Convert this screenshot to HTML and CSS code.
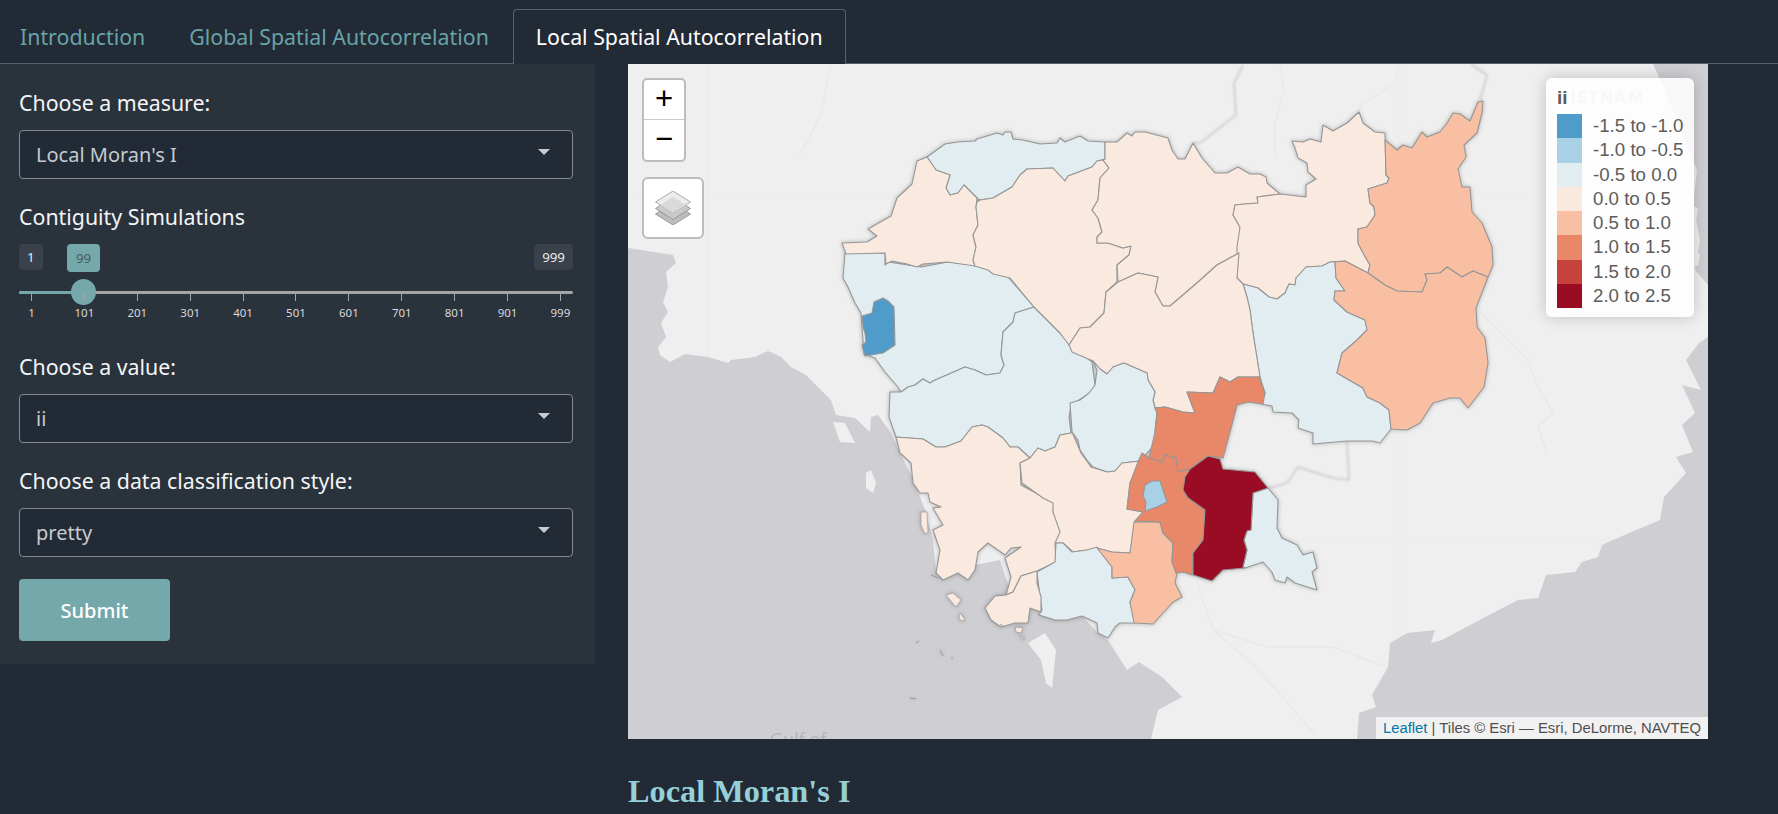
FILE: index.html
```html
<!DOCTYPE html>
<html lang="en">
<head>
<meta charset="utf-8">
<title>Local Spatial Autocorrelation</title>
<link rel="stylesheet" href="styles.css">
</head>
<body>
<nav class="tabs">
  <a class="tab">Introduction</a>
  <a class="tab">Global Spatial Autocorrelation</a>
  <a class="tab tab-active">Local Spatial Autocorrelation</a>
</nav>
<main class="layout">
  <aside class="sidebar">
    <div class="field">
      <div class="field-label">Choose a measure:</div>
      <div class="select"><span>Local Moran's I</span><i class="caret"></i></div>
    </div>
    <div class="field">
      <div class="field-label">Contiguity Simulations</div>
      <div class="slider">
        <div class="pills"><span class="pill">1</span><span class="pill">999</span></div>
        <span class="pill pill-value">99</span>
        <div class="track"><div class="track-fill"></div></div>
        <div class="handle"></div>
        <div class="grid">
          <div class="tick"><i></i><span>1</span></div>
          <div class="tick"><i></i><span>101</span></div>
          <div class="tick"><i></i><span>201</span></div>
          <div class="tick"><i></i><span>301</span></div>
          <div class="tick"><i></i><span>401</span></div>
          <div class="tick"><i></i><span>501</span></div>
          <div class="tick"><i></i><span>601</span></div>
          <div class="tick"><i></i><span>701</span></div>
          <div class="tick"><i></i><span>801</span></div>
          <div class="tick"><i></i><span>901</span></div>
          <div class="tick"><i></i><span>999</span></div>
        </div>
      </div>
    </div>
    <div class="field">
      <div class="field-label">Choose a value:</div>
      <div class="select"><span>ii</span><i class="caret"></i></div>
    </div>
    <div class="field">
      <div class="field-label">Choose a data classification style:</div>
      <div class="select"><span>pretty</span><i class="caret"></i></div>
    </div>
    <button class="submit">Submit</button>
  </aside>
  <section class="content">
    <div class="map">
      <svg class="map-svg" viewBox="628 64 1080 675" xmlns="http://www.w3.org/2000/svg">
        <g class="seams">
          <path d="M708 64V739M1400 64V739M628 196H1708M628 540H1708"/>
        </g>
        <g class="water">
          <path d="M628,248 673,255 676,263 666,272 668,287 663,302 668,312 661,323 666,337 658,347 660,355 670,362 685,354 708,357 728,363 731,360 755,357 768,351 781,357 791,367 806,375 821,390 831,400 836,415 855,418 870,432 871,417 878,415 891,433 900,453 915,483 925,510 933,540 936,573 1000,560 1010,590 1040,612 1055,620 1082,616 1098,633 1108,640 1127,670 1139,662 1162,677 1182,697 1158,710 1151,739 628,739Z"/>
          <path d="M1357,739 1359,713 1376,707 1372,695 1388,667 1390,643 1407,633 1435,630 1431,643 1442,640 1489,615 1518,600 1538,598 1546,575 1575,572 1582,562 1598,557 1602,545 1629,533 1660,520 1664,497 1686,473 1676,457 1693,452 1682,425 1695,413 1682,385 1701,390 1686,360 1699,343 1708,337 1708,739Z"/>
          <path d="M1653,64 1708,64 1708,285 1695,270 1700,240 1693,205 1697,170 1680,130 1665,90Z"/>
        </g>
        <g class="land-islands">
          <path d="M833,422 845,423 855,443 840,442Z"/>
          <path d="M866,473 871,470 876,483 873,493 866,488Z"/>
          <path d="M1028,643 1045,633 1056,650 1052,688 1046,683 1041,660Z"/>
          <path d="M1690,205 1698,208 1696,222 1688,218Z"/>
          <path d="M1692,250 1700,254 1698,266 1690,262Z"/>
        </g>
        <g class="rivers">
          <path d="M830,67 822,110 810,137 800,153"/>
          <path d="M1280,65 1284,90 1275,123 1275,157"/>
          <path d="M1398,67 1395,83 1364,103 1357,112"/>
          <path d="M1481,313 1528,360 1536,383 1553,413 1538,427 1547,453"/>
          <path d="M1197,583 1213,630 1267,647 1333,647 1386,667"/>
          <path d="M1213,630 1256,667 1314,733"/>
        </g>
        <g class="borders">
          <path d="M1243,65 1234,83 1236,115 1200,143 1193,143"/>
          <path d="M1471,64 1487,75 1480,100"/>
          <path d="M1347,442 1349,480 1333,478 1298,467 1287,483 1269,488"/>
        </g>
        <text class="map-label" x="770" y="746">Gulf of</text>
        <text class="map-label map-label-country" x="1558" y="103">VIETNAM</text>
        <g class="provinces">
          <polygon class="c3" points="845,253 885,253 885,265 888,262 921,267 948,262 975,265 990,270 995,273 1008,277 1034,307 1015,313 1013,322 1003,332 1001,355 1004,365 1000,373 986,375 975,370 965,367 933,381 930,383 923,379 915,385 908,387 901,392 898,387 885,372 875,358 864,354 861,313 855,303 848,287 843,278"/>
          <polygon class="c3" points="890,392 889,417 896,437 923,439 936,447 945,447 961,441 972,427 982,425 988,427 1003,438 1010,447 1018,447 1030,458 1038,448 1045,451 1055,447 1060,435 1071,433 1069,417 1071,405 1090,393 1095,385 1092,362 1070,345 1060,333 1034,307 1015,313 1013,322 1003,332 1001,355 1004,365 1000,373 986,375 975,370 965,367 933,381 930,383 923,379 915,385 908,387 901,392"/>
          <polygon class="c3" points="927,157 945,144 958,142 975,141 977,139 997,133 1003,135 1005,132 1011,132 1013,139 1022,140 1027,141 1040,144 1057,143 1060,138 1065,142 1080,136 1088,141 1105,142 1105,159 1097,161 1092,167 1068,176 1065,181 1053,168 1027,169 1020,175 1012,187 993,198 980,200 977,198 964,185 958,193 950,195 946,188 950,175 936,170"/>
          <polygon class="c4" points="842,243 867,242 877,236 868,229 891,216 897,198 912,184 917,161 927,157 936,170 950,175 946,188 950,195 958,193 964,185 977,198 976,207 978,225 973,235 976,247 973,260 975,266 947,262 923,264 917,267 907,264 892,261 886,264 885,253 846,254"/>
          <polygon class="c4" points="977,202 980,200 993,198 1012,187 1020,175 1027,169 1053,168 1065,181 1068,176 1092,167 1097,161 1103,160 1109,168 1100,178 1098,200 1092,210 1098,218 1102,232 1097,237 1097,243 1108,243 1123,248 1131,246 1129,255 1117,265 1117,282 1106,292 1104,313 1090,327 1080,328 1069,345 1060,333 1034,307 1010,278 993,274 988,270 975,266 973,260 976,247 973,235 978,225 976,207"/>
          <polygon class="c4" points="1105,142 1117,142 1127,133 1132,136 1135,132 1145,132 1168,138 1172,150 1178,159 1185,159 1193,143 1202,158 1215,173 1227,173 1238,167 1250,174 1260,174 1266,177 1267,183 1280,194 1257,197 1258,203 1245,204 1235,205 1233,215 1240,227 1240,247 1239,253 1217,265 1198,282 1183,295 1170,306 1163,306 1155,292 1158,277 1138,273 1118,282 1117,265 1129,255 1131,246 1123,248 1108,243 1097,243 1097,237 1102,232 1098,218 1092,210 1098,200 1100,178 1109,168 1103,160 1105,159"/>
          <polygon class="c4" points="1292,141 1303,142 1310,139 1321,142 1323,125 1333,131 1347,123 1359,112 1363,123 1375,132 1385,133 1386,175 1389,178 1387,183 1368,189 1370,203 1374,207 1375,215 1367,227 1358,229 1358,243 1363,253 1370,265 1368,273 1345,261 1330,262 1322,266 1306,267 1296,278 1295,285 1289,284 1285,293 1277,299 1269,297 1258,288 1243,284 1237,278 1237,247 1240,227 1233,215 1235,205 1245,204 1258,203 1257,197 1280,194 1306,197 1306,185 1316,179 1308,172 1307,163 1298,158 1295,148"/>
          <polygon class="c5" points="1385,140 1397,150 1403,145 1412,148 1422,132 1427,137 1440,132 1447,123 1453,113 1460,114 1470,121 1478,102 1483,101 1482,113 1477,133 1464,145 1466,157 1458,169 1462,187 1470,187 1472,212 1482,223 1492,247 1493,265 1488,277 1473,271 1462,277 1447,267 1440,273 1425,274 1427,280 1422,292 1397,291 1385,285 1368,273 1370,265 1363,253 1358,243 1358,229 1367,227 1375,215 1374,207 1370,203 1368,189 1387,183 1389,178 1386,175"/>
          <polygon class="c3" points="1243,284 1258,288 1269,297 1277,299 1285,293 1289,284 1295,285 1296,278 1306,267 1322,266 1330,262 1335,262 1336,278 1345,291 1335,291 1334,300 1347,312 1365,320 1367,330 1357,340 1342,353 1337,373 1363,388 1367,397 1380,403 1389,410 1391,429 1380,443 1373,441 1347,441 1313,444 1313,433 1298,428 1299,420 1292,413 1273,412 1272,406 1261,404 1265,393 1260,377 1253,333 1250,310 1247,297"/>
          <polygon class="c5" points="1335,262 1345,261 1368,273 1385,285 1397,291 1422,292 1427,280 1425,274 1440,273 1447,267 1462,277 1473,271 1488,277 1476,308 1477,327 1485,338 1488,363 1484,387 1468,408 1460,398 1450,398 1433,403 1420,423 1407,430 1391,429 1389,410 1380,403 1367,397 1363,388 1337,373 1342,353 1357,340 1367,330 1365,320 1347,312 1334,300 1335,291 1345,291 1336,278"/>
          <polygon class="c4" points="1069,345 1080,328 1090,327 1104,313 1106,292 1118,282 1138,273 1158,277 1155,292 1163,306 1170,306 1183,295 1198,282 1217,265 1239,253 1237,278 1243,284 1247,297 1250,310 1253,333 1260,377 1238,377 1230,382 1220,377 1213,393 1187,392 1195,413 1183,412 1165,407 1155,408 1153,400 1155,392 1148,380 1147,373 1124,363 1113,367 1107,374 1100,369 1093,361 1072,352"/>
          <polygon class="c3" points="1107,374 1113,367 1124,363 1147,373 1148,380 1155,392 1153,400 1155,408 1157,413 1155,430 1157,440 1150,450 1147,453 1140,461 1122,463 1115,471 1107,472 1093,467 1087,460 1080,450 1078,440 1072,432 1070,403 1080,400 1089,393 1095,385 1097,370 1093,361 1100,369"/>
          <polygon class="c4" points="896,437 923,439 936,447 945,447 961,441 972,427 982,425 988,427 1003,438 1010,447 1018,447 1030,458 1020,463 1021,485 1045,498 1054,503 1053,512 1061,527 1061,543 1055,544 1056,562 1037,571 1021,576 1013,592 1006,595 1011,577 1005,558 1021,547 1011,548 1005,555 988,543 978,552 975,570 968,580 958,573 943,580 936,573 940,550 933,530 943,525 933,508 941,507 930,502 928,493 920,493 913,483 911,463 900,453"/>
          <polygon class="c4" points="1020,463 1030,458 1038,448 1045,451 1055,447 1060,435 1071,433 1072,432 1081,453 1091,467 1107,472 1115,471 1122,463 1140,461 1130,483 1127,509 1143,512 1135,521 1130,553 1112,552 1097,548 1087,550 1073,552 1063,543 1055,543 1060,532 1053,512 1053,503 1043,498 1022,483"/>
          <polygon class="c3" points="1056,543 1063,543 1072,552 1087,550 1097,547 1112,567 1112,578 1128,577 1135,590 1130,602 1135,623 1120,623 1115,627 1108,638 1098,633 1097,623 1082,616 1067,620 1055,620 1039,615 1042,610 1040,597 1037,572 1055,562"/>
          <polygon class="c4" points="1037,571 1037,583 1041,597 1041,612 1030,608 1028,623 1015,623 1001,627 991,620 985,608 995,596 1006,595 1013,592 1021,576"/>
          <polygon class="c5" points="1097,548 1112,552 1130,553 1134,522 1160,522 1163,533 1173,543 1172,562 1177,573 1175,583 1182,597 1173,602 1153,624 1134,623 1130,602 1135,590 1128,577 1112,578 1112,567"/>
          <polygon class="c6" points="1187,392 1213,393 1220,377 1230,382 1238,377 1259,377 1265,393 1263,404 1248,402 1237,405 1230,432 1223,458 1208,456 1190,469 1178,472 1176,458 1165,455 1162,462 1149,458 1155,432 1157,413 1155,408 1165,407 1183,412 1195,413"/>
          <polygon class="c6" points="1142,453 1149,458 1162,462 1165,455 1176,458 1178,472 1190,469 1183,487 1187,497 1205,510 1203,540 1193,553 1192,575 1183,572 1176,573 1172,562 1173,543 1163,533 1160,522 1135,521 1143,512 1127,509 1130,483 1138,462"/>
          <polygon class="c2" points="1152,481 1160,481 1167,502 1157,507 1145,511 1146,502 1143,496 1145,485"/>
          <polygon class="c3" points="1268,488 1278,500 1277,528 1282,538 1297,545 1303,555 1313,552 1317,568 1312,572 1317,590 1295,583 1287,577 1285,583 1275,580 1272,572 1263,562 1245,568 1243,567 1247,550 1244,540 1247,531 1251,530 1253,493"/>
          <polygon class="c8" points="1208,456 1220,459 1223,469 1255,472 1268,488 1253,493 1251,530 1247,531 1244,540 1247,550 1243,567 1245,568 1223,570 1212,581 1193,575 1193,553 1203,540 1205,510 1188,498 1183,490 1185,477 1190,469"/>
          <polygon class="c1" points="862,316 872,313 874,302 883,298 888,301 894,307 895,345 883,353 865,356 862,345 866,342 865,333 863,327"/>
          <polygon class="c4 isle" points="921,512 927,512 928,532 925,534 921,525"/>
          <polygon class="c4 isle" points="946,595 953,593 961,600 956,607"/>
          <polygon class="c4 isle" points="960,613 965,620 961,621 959,617"/>
          <polygon class="c4 isle" points="1015,627 1023,628 1021,633 1016,632"/>
          <polygon class="c4 isle" points="1020,636 1025,638 1021,639"/>
          <path class="specks" d="M931,575 938,578M940,650 943,656M910,698 916,699M916,643 919,641M951,658 953,658M1000,624 1003,626"/>
        </g>
      </svg>
      <div class="zoom-control">
        <a class="zoom-btn">+</a>
        <a class="zoom-btn">−</a>
      </div>
      <div class="layers-control">
        <svg class="layers-icon" viewBox="0 0 36 34" xmlns="http://www.w3.org/2000/svg">
          <path class="layer-low" d="M18 12 35.5 23 18 34 .5 23Z"/>
          <path class="layer-mid" d="M18 6.500 35.500 17.500 18 28.500 .5 17.500Z"/>
          <path class="layer-top" d="M18 0 35.500 11 18 22 .5 11Z"/>
          <path class="layer-inner" d="M18 6 31 14 18 22 5 14Z"/>
        </svg>
      </div>
      <div class="legend">
        <div class="legend-title">ii</div>
        <div class="legend-row"><i class="swatch c1"></i>-1.5 to -1.0</div>
        <div class="legend-row"><i class="swatch c2"></i>-1.0 to -0.5</div>
        <div class="legend-row"><i class="swatch c3"></i>-0.5 to 0.0</div>
        <div class="legend-row"><i class="swatch c4"></i>0.0 to 0.5</div>
        <div class="legend-row"><i class="swatch c5"></i>0.5 to 1.0</div>
        <div class="legend-row"><i class="swatch c6"></i>1.0 to 1.5</div>
        <div class="legend-row"><i class="swatch c7"></i>1.5 to 2.0</div>
        <div class="legend-row"><i class="swatch c8"></i>2.0 to 2.5</div>
      </div>
      <div class="attribution"><a class="attr-link">Leaflet</a> | Tiles © Esri — Esri, DeLorme, NAVTEQ</div>
    </div>
    <h2 class="result-title">Local Moran's I</h2>
  </section>
</main>
</body>
</html>
```
FILE: styles.css
```css
* { box-sizing: border-box; }
html, body { margin: 0; height: 100%; overflow: hidden; }
body {
  background: #222a35;
  color: #fff;
  font-family: "Noto Sans", "Open Sans", sans-serif;
  font-size: 21.33px;
}

/* Tabs */
.tabs {
  display: flex;
  height: 64px;
  padding-top: 9px;
  border-bottom: 1px solid #5b6068;
}
.tab {
  display: flex;
  align-items: center;
  height: 55px;
  padding: 0 22px 1px 19px;
  margin-right: 1px;
  color: #68a3a8;
  border: 1px solid transparent;
  border-bottom: 0;
}
.tab-active {
  color: #fff;
  background: #222a35;
  border-color: #5b6068;
  border-radius: 4px 4px 0 0;
  padding: 0 22px 1px 22px;
}

/* Page */
.layout { display: flex; align-items: flex-start; }
.sidebar {
  flex: 0 0 595px;
  height: 600px;
  padding: 23px 22px 23px 19px;
  background: #2a323c;
  border-radius: 0 0 4px 0;
}
.field { margin-bottom: 22px; }
.field-label {
  height: 32px;
  line-height: 32px;
  margin-bottom: 11px;
  color: #f4f5f6;
}
.select {
  display: flex;
  align-items: center;
  justify-content: space-between;
  height: 49px;
  padding: 0 22px 0 16px;
  background: #222a35;
  border: 1px solid #85898f;
  border-radius: 4px;
  color: #c5cacf;
  font-size: 20px;
}
.caret {
  width: 0;
  height: 0;
  margin-top: -5px;
  border-left: 6px solid transparent;
  border-right: 6px solid transparent;
  border-top: 6px solid #c9cbcd;
}

/* Slider */
.slider { position: relative; height: 85px; }
.pills { display: flex; justify-content: space-between; }
.pill {
  display: block;
  height: 26px;
  line-height: 26px;
  padding: 0 8px;
  background: #3a414b;
  border-radius: 4px;
  font-size: 13.33px;
  color: #e8e9ea;
}
.pill-value {
  position: absolute;
  left: 48px;
  top: 0;
  height: 28px;
  line-height: 28px;
  padding: 0 9px;
  background: #74a8ab;
  color: #4a5a62;
}
.track {
  position: absolute;
  left: 0;
  right: 0;
  top: 47px;
  height: 3px;
  background: #a3a5a8;
  border-radius: 2px;
}
.track-fill { width: 65px; height: 100%; background: #74a8ab; border-radius: 2px 0 0 2px; }
.handle {
  position: absolute;
  left: 52px;
  top: 35px;
  width: 25px;
  height: 26px;
  background: #74a8ab;
  border-radius: 50%;
}
.grid {
  position: absolute;
  left: 12px;
  right: 12px;
  top: 49px;
  display: flex;
  justify-content: space-between;
}
.tick {
  width: 1px;
  display: flex;
  flex-direction: column;
  align-items: center;
}
.tick i { flex: none; width: 1px; height: 8px; background: #a3a5a8; }
.tick span {
  margin-top: 4px;
  font-size: 11.5px;
  line-height: 16px;
  color: #d8d9db;
}

.submit {
  display: block;
  width: 151px;
  height: 62px;
  padding: 0;
  background: #74a8ab;
  border: 0;
  border-radius: 4px;
  color: #fff;
  font: 500 20px "Noto Sans", "Open Sans", sans-serif;
}

/* Content */
.content { flex: 0 0 1080px; margin-left: 33px; }
.map {
  position: relative;
  width: 1080px;
  height: 675px;
  overflow: hidden;
  background: #efefef;
}
.map-svg { display: block; width: 1080px; height: 675px; }
.seams path { fill: none; stroke: #ebebec; stroke-width: 1; }
.water path { fill: #cfcfd3; }
.land-islands path { fill: #efefef; }
.rivers path { fill: none; stroke: #e8e8e9; stroke-width: 1.4; stroke-linejoin: round; }
.borders path {
  fill: none;
  stroke: #d2d2d2;
  stroke-width: 2.2;
  stroke-linejoin: round;
  filter: blur(.8px);
}
.map-label { font: 18px "Open Sans", sans-serif; fill: #b5b5b9; }
.map-label-country { font-weight: 700; font-size: 16px; letter-spacing: 2px; fill: #c5c5c5; }
.provinces { filter: drop-shadow(0 0 2px rgba(0, 0, 0, .25)); }
.provinces polygon { stroke: #969696; stroke-width: 1.1; stroke-linejoin: round; }
.provinces .isle { stroke: #a5a5a5; stroke-width: .8; }
.specks { fill: none; stroke: #999; stroke-width: 1; }
.c1 { background: #4f9bc9; fill: #4f9bc9; }
.c2 { background: #a9d1e6; fill: #a9d1e6; }
.c3 { background: #e2edf2; fill: #e2edf2; }
.c4 { background: #fae9df; fill: #fae9df; }
.c5 { background: #f8bfa2; fill: #f8bfa2; }
.c6 { background: #e88868; fill: #e88868; }
.c7 { background: #c6433d; fill: #c6433d; }
.c8 { background: #9a0c24; fill: #9a0c24; }

/* Map overlays */
.zoom-control {
  position: absolute;
  left: 14px;
  top: 14px;
  width: 44px;
  border: 2px solid #bcbcbc;
  border-radius: 5px;
  background: #fff;
}
.zoom-btn {
  display: block;
  height: 39px;
  text-align: center;
  color: #000;
  font: 400 31px/38px "Liberation Sans", sans-serif;
}
.zoom-btn + .zoom-btn { height: 41px; border-top: 1px solid #ccc; }
.layers-control {
  position: absolute;
  left: 14px;
  top: 113px;
  width: 62px;
  height: 62px;
  display: flex;
  align-items: center;
  justify-content: center;
  background: #fff;
  border: 2px solid #bcbcbc;
  border-radius: 6px;
}
.layers-icon { width: 36px; height: 34px; }
.layer-low { fill: #bdbdbd; stroke: #999; }
.layer-mid { fill: #c9c9c9; stroke: #999; }
.layer-top { fill: #ececec; stroke: #aaa; }
.layer-inner { fill: #d9d9d9; }
.legend {
  position: absolute;
  left: 918px;
  top: 14px;
  width: 148px;
  height: 239px;
  padding: 8px 0 0 11px;
  background: rgba(255, 255, 255, .85);
  border-radius: 6px;
  box-shadow: 0 0 15px rgba(0, 0, 0, .2);
  color: #5c5c5c;
  font-family: "Liberation Sans", sans-serif;
  font-size: 18.7px;
}
.legend-title { height: 28px; line-height: 24px; font-weight: 700; color: #5c5c5c; }
.legend-row {
  display: flex;
  align-items: center;
  height: 24.25px;
  white-space: nowrap;
}
.swatch { flex: none; width: 25px; height: 24.25px; margin-right: 11px; }
.attribution {
  position: absolute;
  right: 0;
  bottom: 0;
  height: 22px;
  line-height: 22px;
  padding: 0 7px;
  background: rgba(255, 255, 255, .7);
  color: #4f4f4f;
  font-family: "Liberation Sans", sans-serif;
  font-size: 14.85px;
  white-space: nowrap;
}
.attr-link { color: #0078a8; }
.result-title {
  margin: 33px 0 0;
  color: #95d0d8;
  font: 700 32.3px/38px "Liberation Serif", serif;
}
```
